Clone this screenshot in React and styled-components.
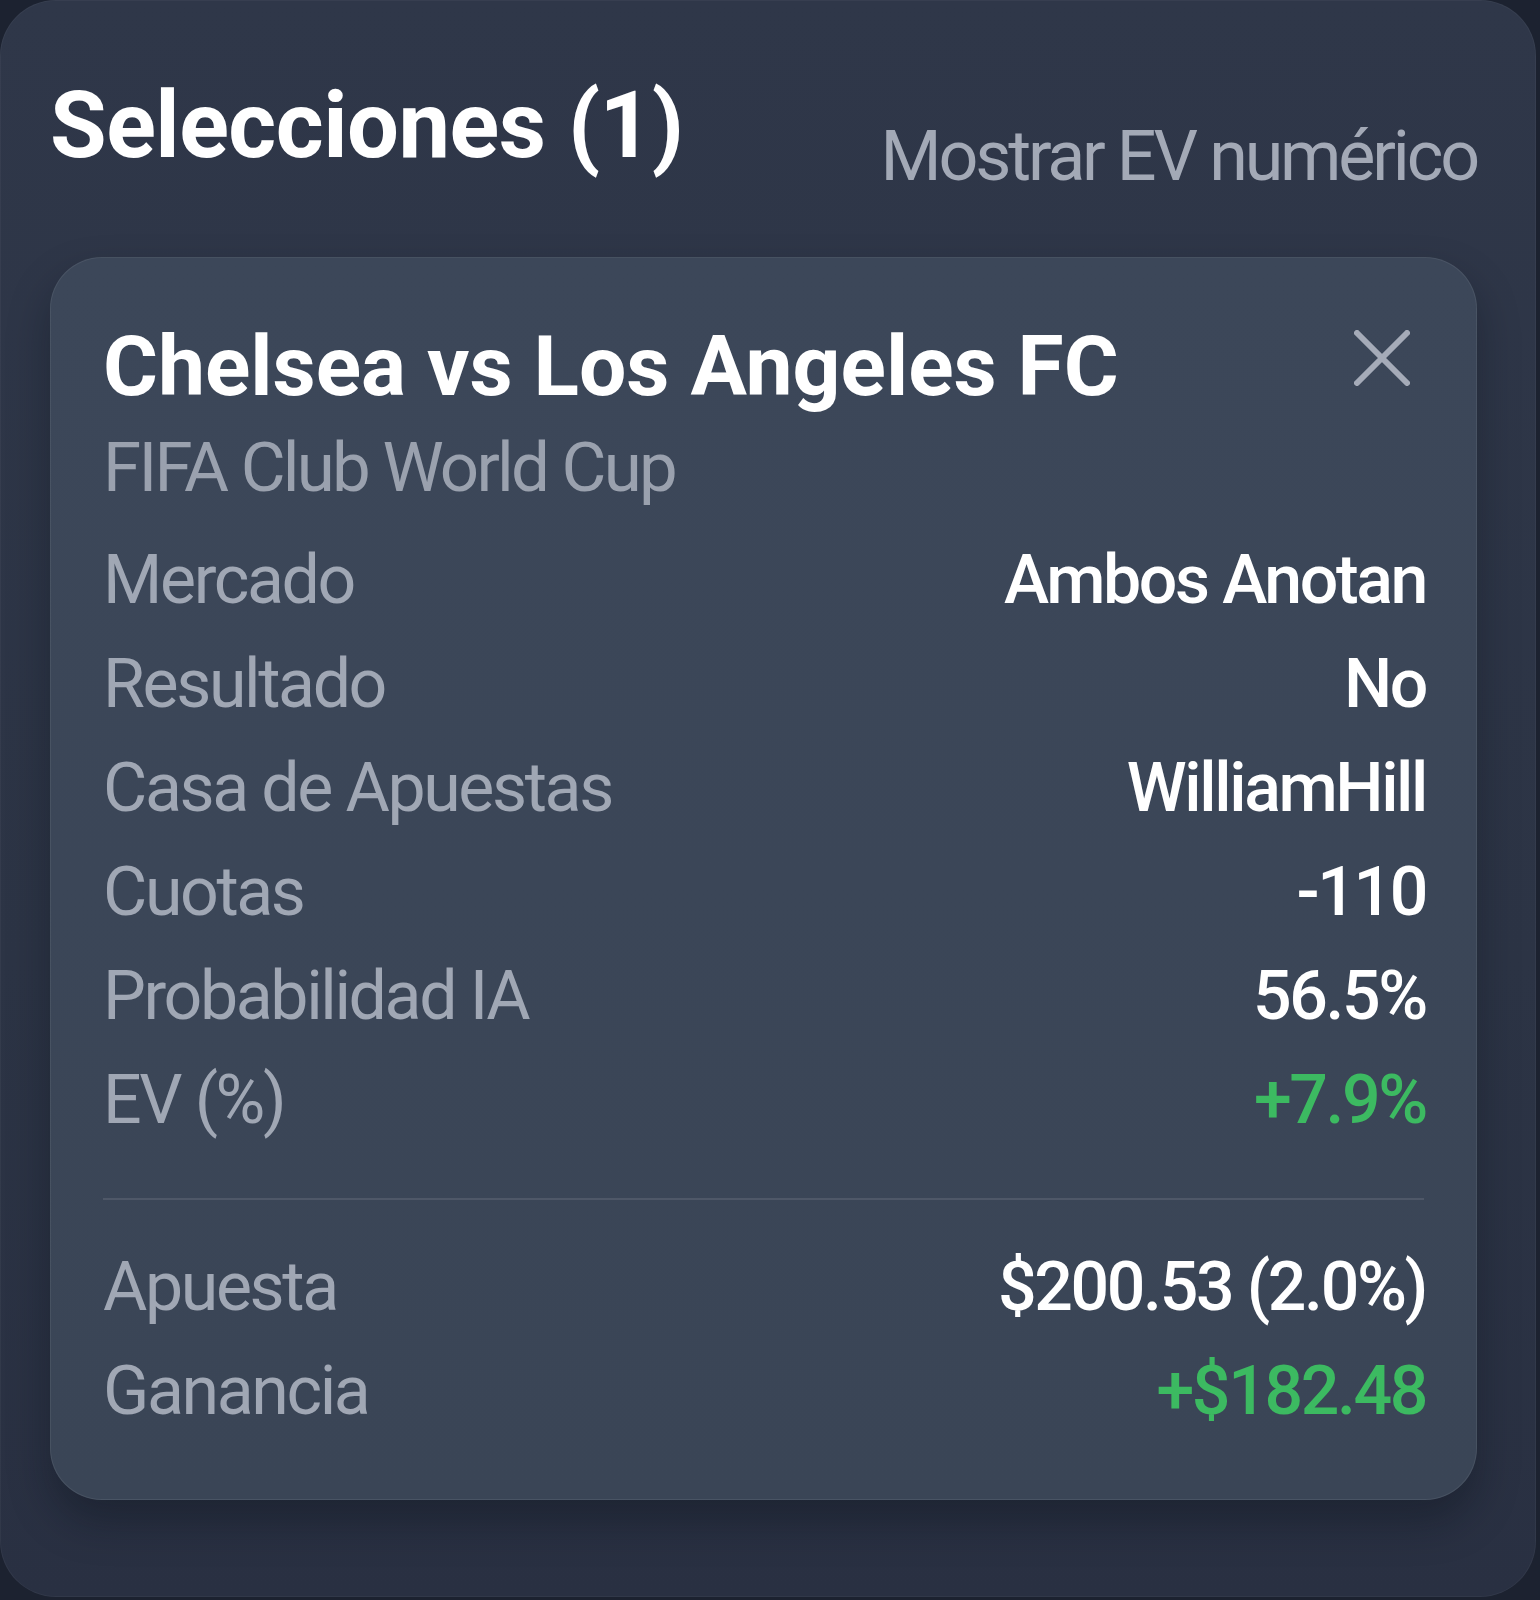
import React from 'react';
import styled, { createGlobalStyle } from 'styled-components';

const GlobalStyle = createGlobalStyle`
  html, body {
    margin: 0;
    padding: 0;
    background-color: #1c2230;
    font-family: Roboto, "Liberation Sans", sans-serif;
  }
`;

const Panel = styled.section`
  box-sizing: border-box;
  width: 1536px;
  height: 1597px;
  padding: 71px 59px 0 50px;
  border-radius: 56px;
  background: linear-gradient(180deg, #2f3749 0%, #2c3445 60%, #293042 100%);
  box-shadow: inset 0 0 0 1px rgba(255, 255, 255, 0.04);
`;

const Header = styled.div`
  display: flex;
  justify-content: space-between;
  align-items: flex-start;
  margin-bottom: 59px;
`;

const Title = styled.h2`
  margin: 0;
  font-size: 92px;
  line-height: 1.2;
  font-weight: 700;
  color: #ffffff;
  letter-spacing: -0.5px;
`;

const Toggle = styled.button`
  margin-top: 43px;
  padding: 0;
  border: none;
  background: none;
  font-family: inherit;
  font-size: 70px;
  line-height: 84px;
  font-weight: 400;
  letter-spacing: -0.045em;
  color: #a3a9b6;
  cursor: pointer;
`;

const Card = styled.div`
  box-sizing: border-box;
  width: 1427px;
  padding: 57px 50px 56px 52px;
  border-radius: 52px;
  background: linear-gradient(180deg, #3c4759 0%, #3a4556 100%);
  border: 1px solid rgba(255, 255, 255, 0.07);
  box-shadow: 0 22px 40px rgba(10, 14, 24, 0.35);
`;

const CardHead = styled.div`
  display: flex;
  justify-content: space-between;
  align-items: flex-start;
`;

const Match = styled.div`
  font-size: 84px;
  line-height: 104px;
  font-weight: 700;
  color: #ffffff;
`;

const CloseButton = styled.button`
  display: flex;
  align-items: center;
  justify-content: center;
  width: 72px;
  height: 72px;
  margin: 7px 8px 0 0;
  padding: 0;
  border: none;
  background: none;
  color: #a5abb8;
  cursor: pointer;
`;

const League = styled.div`
  margin-top: 7px;
  margin-bottom: 19px;
  font-size: 69px;
  line-height: 83px;
  letter-spacing: -0.04em;
  color: #9aa1ae;
`;

const Row = styled.div`
  display: flex;
  justify-content: space-between;
  align-items: baseline;
  font-size: 68px;
  line-height: 104px;
  letter-spacing: -0.035em;
`;

const Label = styled.span`
  color: #a0a7b4;
  font-weight: 400;
`;

const Value = styled.span`
  color: ${(p) => (p.$positive ? '#3cba61' : '#ffffff')};
  font-weight: 500;
`;

const Divider = styled.hr`
  margin: 46px 2px 35px 0;
  border: none;
  height: 2px;
  background-color: rgba(255, 255, 255, 0.1);
`;

const details = [
  { label: 'Mercado', value: 'Ambos Anotan' },
  { label: 'Resultado', value: 'No' },
  { label: 'Casa de Apuestas', value: 'WilliamHill' },
  { label: 'Cuotas', value: '-110' },
  { label: 'Probabilidad IA', value: '56.5%' },
  { label: 'EV (%)', value: '+7.9%', positive: true },
];

const totals = [
  { label: 'Apuesta', value: '$200.53 (2.0%)' },
  { label: 'Ganancia', value: '+$182.48', positive: true },
];

const CloseIcon = () => (
  <svg width="56" height="56" viewBox="0 0 56 56" fill="none">
    <path d="M3 3L53 53M53 3L3 53" stroke="currentColor" strokeWidth="6" strokeLinecap="round" />
  </svg>
);

const App = () => {
  return (
    <>
      <GlobalStyle />
      <Panel>
        <Header>
          <Title>Selecciones (1)</Title>
          <Toggle>Mostrar EV numérico</Toggle>
        </Header>
        <Card>
          <CardHead>
            <Match>Chelsea vs Los Angeles FC</Match>
            <CloseButton aria-label="Cerrar">
              <CloseIcon />
            </CloseButton>
          </CardHead>
          <League>FIFA Club World Cup</League>
          {details.map((d) => (
            <Row key={d.label}>
              <Label>{d.label}</Label>
              <Value $positive={d.positive}>{d.value}</Value>
            </Row>
          ))}
          <Divider />
          {totals.map((d) => (
            <Row key={d.label}>
              <Label>{d.label}</Label>
              <Value $positive={d.positive}>{d.value}</Value>
            </Row>
          ))}
        </Card>
      </Panel>
    </>
  );
};

export default App;
